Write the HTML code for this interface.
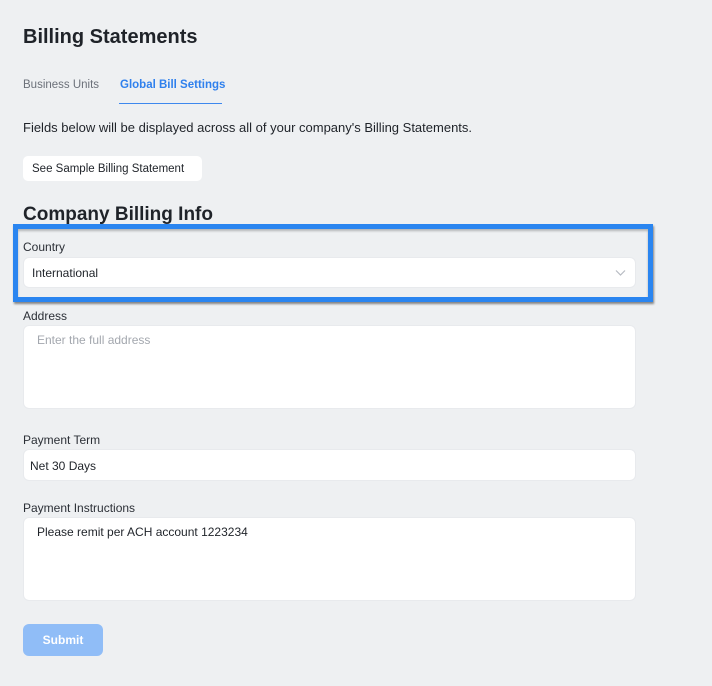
<!DOCTYPE html>
<html><head><meta charset="utf-8"><style>
*{box-sizing:border-box;margin:0;padding:0}
body{width:712px;height:686px;background:#eef0f2;font-family:"Liberation Sans",sans-serif;color:#1f2329;position:relative;overflow:hidden}
.a{position:absolute}
.f{position:absolute;left:23px;width:613px;background:#fff;border-radius:6px;border:1px solid #e8eaed}
.lbl{position:absolute;left:23px;font-size:12px;color:#2b2f36}
.t{font-size:12px;color:#1f2329}
</style></head><body>
<div class="a" style="left:23px;top:26px;font-size:20px;font-weight:bold;color:#1f2329">Billing Statements</div>
<div class="a" style="left:23px;top:79px;font-size:11.5px;color:#6b7079">Business Units</div>
<div class="a" style="left:120px;top:79px;font-size:11.5px;font-weight:bold;color:#2f80ed">Global Bill Settings</div>
<div class="a" style="left:119px;top:103px;width:103px;height:1px;background-color:#3d88ee"></div>
<div class="a" style="left:23px;top:120px;font-size:13px;color:#1f2329">Fields below will be displayed across all of your company's Billing Statements.</div>
<div class="a" style="left:23px;top:156px;width:179px;height:25px;background:#fff;border-radius:5px;font-size:11.5px;line-height:27px;padding-left:9px">See Sample Billing Statement</div>
<div class="a" style="left:23px;top:204px;font-size:19px;font-weight:bold">Company Billing Info</div>
<div class="a" style="left:13px;top:224px;width:640px;height:78px;border:5px solid #2a85f0;box-shadow:1px 2px 2px rgba(0,0,0,.45), inset 0 2px 2px rgba(0,0,0,.25)"></div>
<div class="lbl" style="top:240px">Country</div>
<div class="f" style="top:257px;height:31px"><span class="a t" style="left:8px;top:8px">International</span>
<svg class="a" style="right:9px;top:11px" width="11" height="8" viewBox="0 0 11 8"><path d="M1 1.5l4.5 4.5 4.5-4.5" fill="none" stroke="#b7bbc2" stroke-width="1.2"/></svg></div>
<div class="lbl" style="top:309px">Address</div>
<div class="f" style="top:325px;height:84px"><span class="a t" style="left:13px;top:7px;color:#a3a7ae">Enter the full address</span></div>
<div class="lbl" style="top:433px">Payment Term</div>
<div class="f" style="top:449px;height:32px"><span class="a t" style="left:6px;top:9px">Net 30 Days</span></div>
<div class="lbl" style="top:501px">Payment Instructions</div>
<div class="f" style="top:517px;height:84px"><span class="a t" style="left:13px;top:7px">Please remit per ACH account 1223234</span></div>
<div class="a" style="left:23px;top:624px;width:80px;height:32px;background:#90bdf7;border-radius:6px;color:#fff;font-size:12px;font-weight:bold;text-align:center;line-height:32px">Submit</div>
</body></html>
